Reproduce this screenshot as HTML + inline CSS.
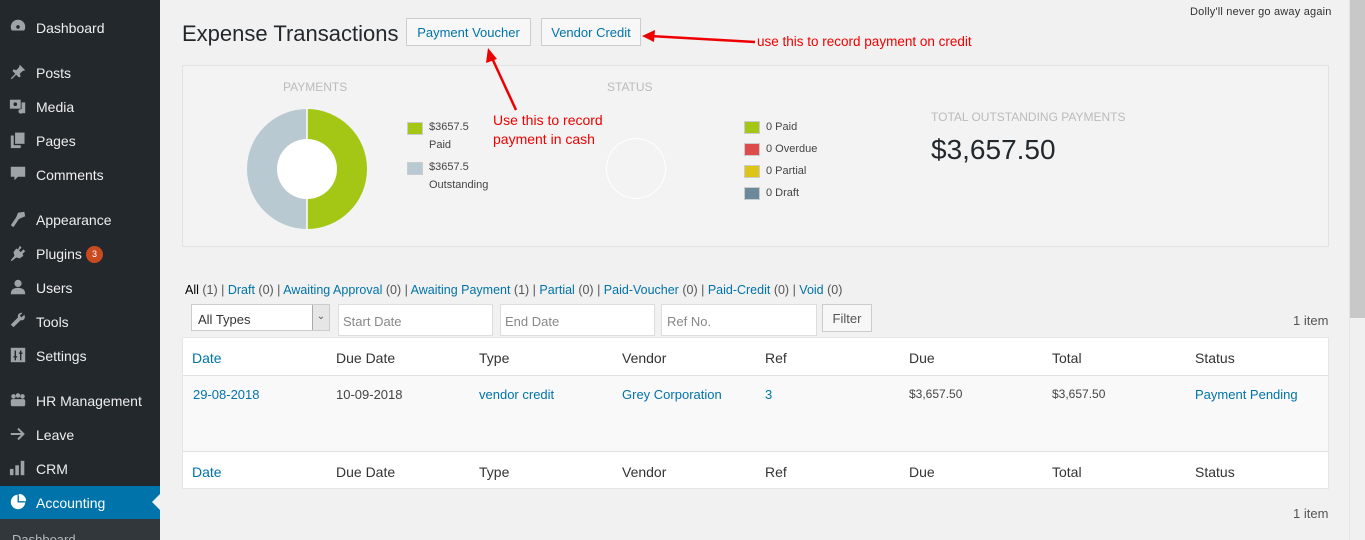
<!DOCTYPE html>
<html><head><meta charset="utf-8"><style>
*{margin:0;padding:0;box-sizing:border-box}
html,body{width:1365px;height:540px;overflow:hidden}
body{background:#f1f1f1;font-family:"Liberation Sans",sans-serif;font-size:13px;color:#444;position:relative}
.a{position:absolute;white-space:nowrap}
#sb{position:absolute;left:0;top:0;width:160px;height:540px;background:#23282d}
.mi{position:absolute;left:36px;color:#eee;font-size:14px}
.ic{position:absolute;left:9px;width:18px;height:18px}
.box{position:absolute;background:#fff;border:1px solid #ddd}
.sw{position:absolute;width:16px;height:13px;border:1px solid #ccc}
.th{position:absolute;font-size:14px;color:#333}
.l,.th.l{color:#0073aa}
</style></head><body>
<div id="sb">
<svg class="ic" style="top:17px" viewBox="0 0 20 20"><circle cx="10" cy="11" r="8" fill="#9ea3a8"/><circle cx="10" cy="11" r="2" fill="#23282d"/><rect x="2" y="15" width="16" height="4" fill="#23282d"/></svg>
<div class="mi a" style="top:20px">Dashboard</div>
<svg class="ic" style="top:63px" viewBox="0 0 20 20"><path d="M12 2l6 6-3 1-3 3 1 3-2 1-3-3-5 5-1-1 5-5-3-3 1-2 3 1 3-3z" fill="#9ea3a8"/></svg>
<div class="mi a" style="top:65px">Posts</div>
<svg class="ic" style="top:97px" viewBox="0 0 20 20"><rect x="1" y="3" width="12" height="10" fill="#9ea3a8"/><circle cx="7" cy="8" r="2" fill="#23282d"/><rect x="14" y="6" width="4" height="12" fill="#9ea3a8"/><circle cx="13" cy="16" r="2.5" fill="#9ea3a8"/></svg>
<div class="mi a" style="top:99px">Media</div>
<svg class="ic" style="top:131px" viewBox="0 0 20 20"><rect x="2" y="5" width="11" height="14" fill="#9ea3a8"/><rect x="6" y="1" width="12" height="14" fill="#9ea3a8" stroke="#23282d" stroke-width="1.5"/></svg>
<div class="mi a" style="top:133px">Pages</div>
<svg class="ic" style="top:165px" viewBox="0 0 20 20"><path d="M2 2h16v11h-8l-4 4v-4H2z" fill="#9ea3a8"/></svg>
<div class="mi a" style="top:167px">Comments</div>
<svg class="ic" style="top:210px" viewBox="0 0 20 20"><path d="M10 3l7-1 1 5-7 3-6 9-3-2 6-9z" fill="#9ea3a8"/></svg>
<div class="mi a" style="top:212px">Appearance</div>
<svg class="ic" style="top:244px" viewBox="0 0 20 20"><path d="M12 2l2 2-3 3 2 2 3-3 2 2-3 3 1 2-4 3-4-1-5 4-1-1 4-5-1-4 3-4 2 1z" fill="#9ea3a8"/></svg>
<div class="mi a" style="top:246px">Plugins</div>
<div class="a" style="left:86px;top:246px;width:17px;height:17px;border-radius:9px;background:#ca4a1f;color:#fff;font-size:9px;text-align:center;line-height:17px">3</div>
<svg class="ic" style="top:278px" viewBox="0 0 20 20"><circle cx="10" cy="6" r="4" fill="#9ea3a8"/><path d="M2 18c0-6 4-7 8-7s8 1 8 7z" fill="#9ea3a8"/></svg>
<div class="mi a" style="top:280px">Users</div>
<svg class="ic" style="top:312px" viewBox="0 0 20 20"><path d="M17 3l-3 3-2-2 3-3c-3-1-6 2-5 5L2 14l3 3 8-8c3 1 6-2 4-6z" fill="#9ea3a8"/></svg>
<div class="mi a" style="top:314px">Tools</div>
<svg class="ic" style="top:346px" viewBox="0 0 20 20"><rect x="2" y="2" width="16" height="16" fill="#9ea3a8"/><path d="M7 5v11M13 5v11M5 12h4M11 8h4" stroke="#23282d" stroke-width="1.5"/></svg>
<div class="mi a" style="top:348px">Settings</div>
<svg class="ic" style="top:391px" viewBox="0 0 20 20"><circle cx="5" cy="6" r="2.5" fill="#9ea3a8"/><circle cx="10" cy="5" r="2.5" fill="#9ea3a8"/><circle cx="15" cy="6" r="2.5" fill="#9ea3a8"/><rect x="2" y="9" width="16" height="8" rx="2" fill="#9ea3a8"/></svg>
<div class="mi a" style="top:393px">HR Management</div>
<svg class="ic" style="top:425px" viewBox="0 0 20 20"><path d="M2 10h14M10 4l6 6-6 6" stroke="#9ea3a8" stroke-width="2.2" fill="none"/></svg>
<div class="mi a" style="top:427px">Leave</div>
<svg class="ic" style="top:459px" viewBox="0 0 20 20"><rect x="1" y="11" width="4" height="7" fill="#9ea3a8"/><rect x="7" y="7" width="4" height="11" fill="#9ea3a8"/><rect x="13" y="2" width="4" height="16" fill="#9ea3a8"/></svg>
<div class="mi a" style="top:461px">CRM</div>
<div class="a" style="left:0;top:486px;width:160px;height:33px;background:#0073aa"></div>
<div class="a" style="left:152px;top:494px;width:0;height:0;border:8px solid transparent;border-right-color:#f1f1f1;border-left:0"></div>
<svg class="ic" style="top:493px" viewBox="0 0 20 20"><circle cx="10" cy="10" r="8" fill="#fff"/><path d="M10 2v8h8" fill="#0073aa" stroke="#0073aa"/><path d="M11 1v8h8A8 8 0 0 0 11 1z" fill="#fff"/></svg>
<div class="mi a" style="top:495px;color:#fff">Accounting</div>
<div class="a" style="left:0;top:519px;width:160px;height:21px;background:#32373c"></div>
<div class="a" style="left:12px;top:532px;color:#b4b9be;font-size:13px">Dashboard</div>
</div>

<div class="a" style="left:182px;top:21px;font-size:22px;color:#23282d">Expense Transactions</div>
<div class="a" style="left:406px;top:18px;width:125px;height:28px;border:1px solid #ccc;background:#f7f7f7;color:#0073aa;font-size:13px;text-align:center;line-height:27px">Payment Voucher</div>
<div class="a" style="left:541px;top:18px;width:100px;height:28px;border:1px solid #ccc;background:#f7f7f7;color:#0073aa;font-size:13px;text-align:center;line-height:27px">Vendor Credit</div>
<div class="a" style="left:1190px;top:6px;font-size:11px;color:#333;letter-spacing:0.2px">Dolly'll never go away again</div>
<div class="a" style="left:757px;top:34px;font-size:13.5px;color:#e00">use this to record payment on credit</div>

<div class="a" style="left:182px;top:65px;width:1147px;height:182px;background:#f3f3f3;border:1px solid #e2e2e2"></div>
<div class="a" style="left:283px;top:80px;font-size:12px;color:#bbb">PAYMENTS</div>
<div class="a" style="left:607px;top:80px;font-size:12px;color:#bbb">STATUS</div>
<svg class="a" style="left:246px;top:108px" width="122" height="122" viewBox="0 0 122 122">
<path d="M61 1A60 60 0 0 1 61 121Z" fill="#a4c615"/>
<path d="M61 1A60 60 0 0 0 61 121Z" fill="#b8c9d1"/>
<circle cx="61" cy="61" r="30" fill="#fff"/>
<line x1="61" y1="0" x2="61" y2="122" stroke="#fff" stroke-width="1.5"/>
</svg>
<div class="sw" style="left:407px;top:122px;background:#a4c615"></div>
<div class="a" style="left:429px;top:121px;font-size:11px">$3657.5</div>
<div class="a" style="left:429px;top:139px;font-size:11px">Paid</div>
<div class="sw" style="left:407px;top:162px;background:#b8c9d1"></div>
<div class="a" style="left:429px;top:161px;font-size:11px">$3657.5</div>
<div class="a" style="left:429px;top:179px;font-size:11px">Outstanding</div>
<div class="a" style="left:493px;top:111px;font-size:14px;color:#e00;line-height:19px">Use this to record<br>payment in cash</div>
<div class="a" style="left:606px;top:138px;width:60px;height:61px;border:1.5px solid #fff;border-radius:50%"></div>
<div class="sw" style="left:744px;top:121px;background:#a4c615"></div><div class="a" style="left:766px;top:121px;font-size:11px">0 Paid</div>
<div class="sw" style="left:744px;top:143px;background:#dd4b4b"></div><div class="a" style="left:766px;top:143px;font-size:11px">0 Overdue</div>
<div class="sw" style="left:744px;top:165px;background:#dfc418"></div><div class="a" style="left:766px;top:165px;font-size:11px">0 Partial</div>
<div class="sw" style="left:744px;top:187px;background:#6a8a9c"></div><div class="a" style="left:766px;top:187px;font-size:11px">0 Draft</div>
<div class="a" style="left:931px;top:110px;font-size:12px;color:#bbb">TOTAL OUTSTANDING PAYMENTS</div>
<div class="a" style="left:931px;top:134px;font-size:28px;color:#23282d">$3,657.50</div>

<svg class="a" style="left:0;top:0" width="1365" height="540">
<line x1="755" y1="42" x2="650" y2="36" stroke="#e00" stroke-width="2.5"/>
<path d="M642 36l13-6-1 12z" fill="#e00"/>
<line x1="516" y1="110" x2="492" y2="58" stroke="#e00" stroke-width="2.5"/>
<path d="M488 48l9 11-11 4z" fill="#e00"/>
</svg>

<div class="a" style="left:185px;top:283px;font-size:12.5px;color:#555"><span style="color:#000">All</span> (1) | <span class="l">Draft</span> (0) | <span class="l">Awaiting Approval</span> (0) | <span class="l">Awaiting Payment</span> (1) | <span class="l">Partial</span> (0) | <span class="l">Paid-Voucher</span> (0) | <span class="l">Paid-Credit</span> (0) | <span class="l">Void</span> (0)</div>
<div class="box" style="left:191px;top:304px;width:139px;height:27px;border-color:#ccc"></div>
<div class="a" style="left:198px;top:312px;font-size:13px;color:#333">All Types</div>
<div class="a" style="left:312px;top:305px;width:17px;height:25px;background:#e6e6e6;border-left:1px solid #aaa;color:#555;font-size:10px;text-align:center;line-height:24px">⌄</div>
<div class="box" style="left:338px;top:304px;width:155px;height:32px"></div><div class="a" style="left:343px;top:314px;color:#888">Start Date</div>
<div class="box" style="left:500px;top:304px;width:155px;height:32px"></div><div class="a" style="left:505px;top:314px;color:#888">End Date</div>
<div class="box" style="left:661px;top:304px;width:156px;height:32px"></div><div class="a" style="left:667px;top:314px;color:#888">Ref No.</div>
<div class="a" style="left:822px;top:304px;width:50px;height:28px;border:1px solid #ccc;background:#f7f7f7;text-align:center;line-height:27px;color:#555">Filter</div>
<div class="a" style="left:1293px;top:313px;color:#555">1 item</div>

<div class="box" style="left:182px;top:337px;width:1147px;height:152px;border-color:#e5e5e5"></div>
<div class="a" style="left:183px;top:375px;width:1145px;height:77px;background:#f9f9f9;border-top:1px solid #e1e1e1;border-bottom:1px solid #e1e1e1"></div>
<div class="th a l" style="left:192px;top:350px">Date</div><div class="th a" style="left:336px;top:350px">Due Date</div><div class="th a" style="left:479px;top:350px">Type</div><div class="th a" style="left:622px;top:350px">Vendor</div><div class="th a" style="left:765px;top:350px">Ref</div><div class="th a" style="left:909px;top:350px">Due</div><div class="th a" style="left:1052px;top:350px">Total</div><div class="th a" style="left:1195px;top:350px">Status</div>
<div class="a l" style="left:193px;top:387px">29-08-2018</div><div class="a" style="left:336px;top:387px">10-09-2018</div><div class="a l" style="left:479px;top:387px">vendor credit</div><div class="a l" style="left:622px;top:387px">Grey Corporation</div><div class="a l" style="left:765px;top:387px">3</div><div class="a" style="left:909px;top:387px;font-size:12px">$3,657.50</div><div class="a" style="left:1052px;top:387px;font-size:12px">$3,657.50</div><div class="a l" style="left:1195px;top:387px">Payment Pending</div>
<div class="th a l" style="left:192px;top:464px">Date</div><div class="th a" style="left:336px;top:464px">Due Date</div><div class="th a" style="left:479px;top:464px">Type</div><div class="th a" style="left:622px;top:464px">Vendor</div><div class="th a" style="left:765px;top:464px">Ref</div><div class="th a" style="left:909px;top:464px">Due</div><div class="th a" style="left:1052px;top:464px">Total</div><div class="th a" style="left:1195px;top:464px">Status</div>
<div class="a" style="left:1293px;top:506px;color:#555">1 item</div>

<div class="a" style="left:1349px;top:0;width:16px;height:540px;background:#f0f0f0;border-left:1px solid #e4e4e4"></div>
<div class="a" style="left:1350px;top:0;width:15px;height:318px;background:#c8c8c8"></div>
</body></html>
